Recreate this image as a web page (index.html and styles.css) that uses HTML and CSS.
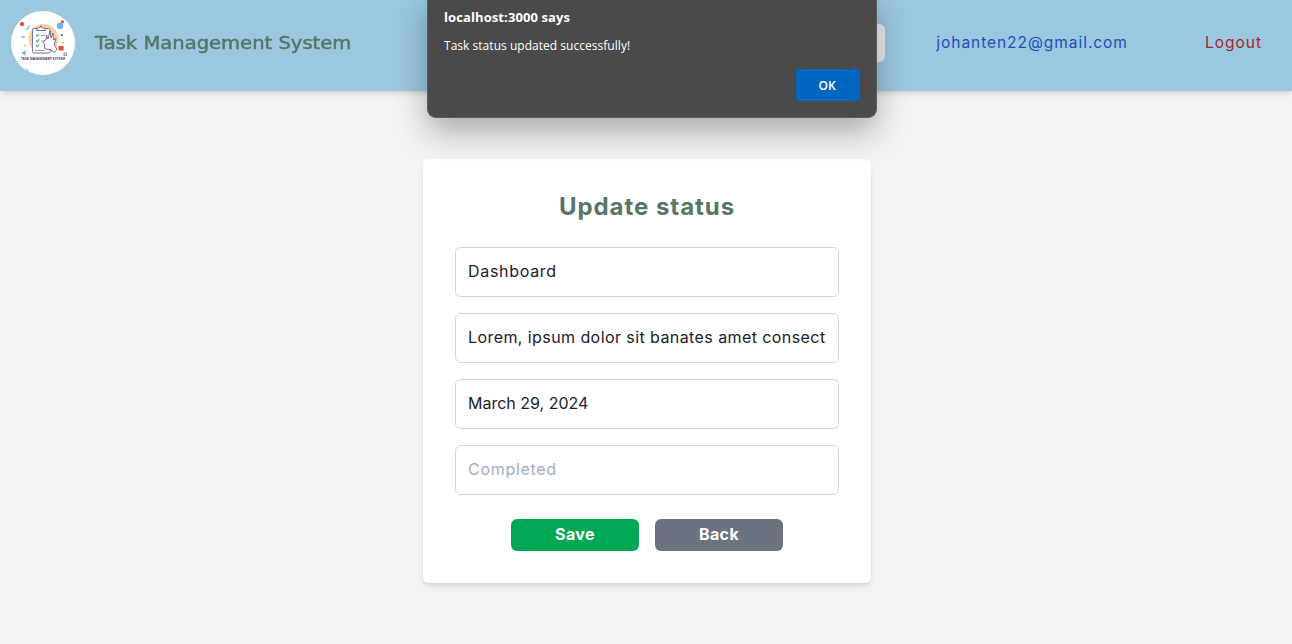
FILE: index.html
```html
<!DOCTYPE html>
<html lang="en">
<head>
<meta charset="utf-8">
<title>Task Management System</title>
<link rel="stylesheet" href="styles.css">
</head>
<body>
<header class="topbar">
  <div class="logo">
    <svg viewBox="0 0 64 64" width="64" height="64" aria-hidden="true">
      <circle cx="32" cy="32" r="32" fill="#fff"/>
      <g class="logo-art">
        <circle cx="32.500" cy="28" r="15" fill="#fbcf9f"/>
        <rect x="21.500" y="17.500" width="17.500" height="24.500" rx="1.500" fill="#fff" stroke="#7274a0" stroke-width="1"/>
        <path d="M25.500 19.500 L26.500 17 H28.500 L30 14.500 L31.500 17 H33.500 L34.500 19.500 Z" fill="#fff" stroke="#7274a0" stroke-width="1"/>
        <path d="M25 24l1.200 1.200 2-2.400M25 29.500l1.200 1.200 2-2.400M25 34.500l1.200 1.200 2-2.400" fill="none" stroke="#4aa578" stroke-width="1.100"/>
        <path d="M24.500 39.500h9M30 24.500h4M30 30h2" stroke="#8b8db0" stroke-width="1"/>
        <path d="M34 38 L32.500 30 L35 29 L35.500 24 L37 28 L39 20 L40 27 L42 22 L42.500 29 L45 27.500 L43 34 L46 38 L43.500 41.500 L39 38.500 Z" fill="#fff" stroke="#7274a0" stroke-width="1" stroke-linejoin="round"/>
        <rect x="9" y="11" width="4" height="4" rx="1.500" fill="#ee4b2b"/>
        <path d="M15.500 19l2-3.500 1.500-1" fill="none" stroke="#47a56f" stroke-width="1"/>
        <rect x="10.500" y="25.500" width="3.500" height="1" fill="#6f7198"/>
        <rect x="13" y="33.500" width="2" height="2" fill="#fbc58d"/>
        <path d="M10.500 42l4-2.800v5.600z" fill="#67bce8"/>
        <circle cx="49" cy="15" r="3.200" fill="#63b5e8"/>
        <rect x="50" y="9.500" width="2.800" height="2.800" fill="#ee4b2b"/>
        <rect x="50" y="23" width="2" height="2" fill="#6f7198"/>
        <rect x="51" y="31" width="2" height="2" fill="#fbc58d"/>
        <rect x="47.500" y="35" width="5" height="4.500" fill="#ee4b2b"/>
        <rect x="53" y="42" width="2.500" height="2.500" fill="none" stroke="#6f7198" stroke-width=".8"/>
        <rect x="15.500" y="58.500" width="1.500" height="1.500" fill="#67c9a5"/>
        <text x="32" y="49" class="logo-caption" text-anchor="middle">TASK MANAGEMENT SYSTEM</text>
      </g>
    </svg>
  </div>
  <h1 class="brand">Task Management System</h1>
  <div class="search"></div>
  <a class="user" href="#">johanten22@gmail.com</a>
  <a class="logout" href="#">Logout</a>
</header>

<main class="page">
  <form class="card">
    <h2 class="card-title">Update status</h2>
    <input class="field" type="text" value="Dashboard">
    <input class="field field-long" type="text" value="Lorem, ipsum dolor sit banates amet consectetur adipisicing">
    <input class="field field-date" type="text" value="March 29, 2024">
    <input class="field" type="text" placeholder="Completed">
    <div class="actions">
      <button class="btn btn-save" type="button">Save</button>
      <button class="btn btn-back" type="button">Back</button>
    </div>
  </form>
</main>

<div class="dialog" role="alertdialog">
  <div class="dialog-origin">localhost:3000 says</div>
  <div class="dialog-message">Task status updated successfully!</div>
  <div class="dialog-actions"><button class="dialog-ok" type="button">OK</button></div>
</div>
</body>
</html>
```
FILE: styles.css
```css
* { box-sizing: border-box; }
html, body { margin: 0; height: 100%; }
body {
  background: #f3f4f6;
  font-family: "Inter", "Open Sans", sans-serif;
  overflow: hidden;
}
.topbar {
  display: flex;
  align-items: center;
  height: 91px;
  padding: 0 30px 5px 11px;
  background: #9bc8e0;
  box-shadow: 0 4px 6px -1px rgba(0,0,0,.1), 0 2px 4px -2px rgba(0,0,0,.1);
}
.logo { width: 64px; height: 64px; flex: none; }
.logo svg { display: block; }
.logo-art { filter: blur(.3px); }
.logo-caption { font-family: "Liberation Sans", sans-serif; font-size: 3px; font-weight: 700; fill: #33344f; }
.brand {
  margin: 0 0 0 20px;
  padding-bottom: 1px;
  width: 233px;
  font-family: "DejaVu Sans", sans-serif;
  font-size: 17px;
  font-weight: 400;
  -webkit-text-stroke: .45px #557566;
  color: #557566;
  white-space: nowrap;
  transform: scaleX(1.15);
  transform-origin: left center;
}
.search {
  width: 240px;
  height: 38px;
  margin-left: auto;
  border-radius: 6px;
  background: #e9eef1;
}
.user { margin-left: 51px; padding-bottom: 2px; font-size: 15.500px; letter-spacing: .95px; color: #1e4fb4; text-decoration: none; white-space: nowrap; }
.logout { margin-left: 77px; padding-bottom: 2px; font-size: 15.500px; letter-spacing: 1px; color: #a5242b; text-decoration: none; }
.page { display: flex; justify-content: center; padding: 68px 0 0 2px; }
.card {
  display: flex;
  flex-direction: column;
  gap: 16px;
  width: 448px;
  height: 424px;
  padding: 32px;
  background: #fff;
  border-radius: 6px;
  box-shadow: 0 4px 6px -1px rgba(0,0,0,.1), 0 2px 4px -2px rgba(0,0,0,.1);
}
.card-title {
  margin: 0 0 8px;
  height: 32px;
  line-height: 32px;
  text-align: center;
  font-size: 24px;
  font-weight: 700;
  letter-spacing: .95px;
  color: #557566;
}
.field {
  display: block;
  width: 100%;
  height: 50px;
  padding: 0 12px 2px;
  border: 1px solid #d1d5db;
  border-radius: 6px;
  background: #fff;
  font: 400 16px "Inter", "Open Sans", sans-serif;
  letter-spacing: .7px;
  color: #1a202c;
  outline: none;
}
.field-long { letter-spacing: .42px; }
.field-date { letter-spacing: 0; }
.field::placeholder { color: #a0aec0; opacity: 1; }
.actions { display: flex; justify-content: center; gap: 16px; margin-top: 8px; }
.btn {
  width: 128px;
  height: 32px;
  padding: 0 0 3px;
  border: 0;
  border-radius: 6px;
  color: #fff;
  font: 700 16px "Inter", "Open Sans", sans-serif;
  letter-spacing: .4px;
}
.btn-save { background: #00a854; }
.btn-back { background: #6b7280; }
.dialog {
  position: absolute;
  left: 427px;
  top: -8px;
  width: 450px;
  height: 126px;
  padding: 16px;
  background: #4a4a4a;
  border: 1px solid #5c5c5c;
  border-top: 0;
  border-radius: 0 0 9px 9px;
  box-shadow: 0 14px 32px rgba(0,0,0,.3);
  color: #fff;
  font-family: "Open Sans", "Noto Sans", sans-serif;
  font-size: 12px;
}
.dialog-origin { font-weight: 700; font-size: 13px; line-height: 18px; letter-spacing: .1px; }
.dialog-message { margin-top: 11px; line-height: 18px; letter-spacing: .03px; }
.dialog-actions { display: flex; justify-content: flex-end; margin-top: 14px; }
.dialog-ok {
  width: 64px;
  height: 32px;
  padding: 0 2px 0 0;
  border: 0;
  border-radius: 2px;
  background: #0067c0;
  color: #fff;
  font: 600 12px "Open Sans", "Noto Sans", sans-serif;
}
```
